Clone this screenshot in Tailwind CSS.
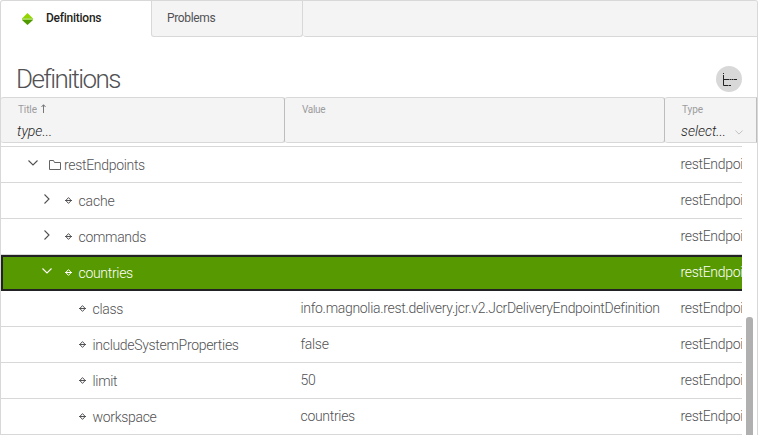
<!DOCTYPE html>
<html lang="en">
<head>
<meta charset="utf-8">
<title>Definitions</title>
<script src="https://cdn.jsdelivr.net/npm/@tailwindcss/browser@4"></script>
</head>
<body class="w-[758px] h-[435px] overflow-hidden bg-white font-['Roboto',sans-serif] text-[#525254]">
<svg class="hidden">
  <symbol id="down" viewBox="0 0 10 6"><path d="M.5 .5 5 5 9.500 .5" fill="none" stroke="currentColor" stroke-width="1.100"/></symbol>
  <symbol id="right" viewBox="0 0 6 10"><path d="M.5 .5 5 5 .5 9.500" fill="none" stroke="currentColor" stroke-width="1.100"/></symbol>
  <symbol id="node" viewBox="0 0 7 7"><path d="M3.500 .6 6.200 3.500 3.500 6.400 .8 3.500ZM0 3.500H7" fill="none" stroke="currentColor" stroke-width="1"/></symbol>
</svg>
<div class="relative flex flex-col w-[758px] h-[435px] overflow-hidden border-t border-x border-[#d8d8d8] rounded-t-[3px]">
  <nav class="flex h-9 shrink-0 text-[12px] leading-[34px]">
    <div class="w-[150px] flex items-start">
      <svg class="w-[11px] h-3 mt-3 ml-[20.500px]" viewBox="0 0 11 12"><path d="M5.500 0 11 5.500H0Z" fill="#93d500"/><path d="M0 5h11v2H0Z" fill="#a4d850"/><path d="M0 7H11L5.500 12Z" fill="#4f9a00"/></svg>
      <span class="ml-[13.500px] font-medium text-[#1f1f21] tracking-[-0.25px]">Definitions</span>
    </div>
    <div class="w-[152px] bg-[#f4f4f4] border-x border-b border-[#d8d8d8] rounded-b-[3px] pl-[15px] tracking-[-0.35px]">Problems</div>
    <div class="grow bg-[#f4f4f4] border-b border-[#d8d8d8] rounded-bl-[3px]"></div>
  </nav>
  <header class="flex h-[60px] shrink-0 justify-between pl-[15px] pr-[15px]">
    <h1 class="mt-[26px] text-[26px] leading-[32px] font-light tracking-[-1.600px]">Definitions</h1>
    <div class="w-[26px] h-[26px] mt-[29px] rounded-full bg-[#d8d8d8] flex">
      <svg class="w-[26px] h-[26px]" viewBox="0 0 26 26" fill="none" stroke="#222224"><path d="M7.500 7v1M7.500 9v10.500h5M7.500 13.500h6M14 13.500h1M15.500 13.500h2M18 13.500h3M13 19.500h2"/></svg>
    </div>
  </header>
  <div class="flex h-[46px] shrink-0 bg-[#f4f4f4] text-[10px] leading-[12px] text-[#9c9c9e] tracking-[-0.1px]">
    <div class="w-[284px] border-y border-r border-[#d8d8d8] border-r-[#bdbdbd] rounded-[3px] pl-[17px] pt-[6px]">
      <div class="flex h-3">Title<svg class="w-[5px] h-[9px] ml-[4px]" viewBox="0 0 5 9"><path d="M2.500 9V1M.5 3 2.500 .7 4.500 3" fill="none" stroke="#777"/></svg></div>
      <div class="-ml-px mt-[6px] text-[14px] leading-[18px] italic font-light text-[#222] tracking-normal">type...</div>
    </div>
    <div class="w-[380px] border-y border-r border-[#d8d8d8] border-r-[#bdbdbd] rounded-[3px] pl-[17px] pt-[6px] tracking-[-0.3px]">Value</div>
    <div class="grow border-y border-r border-[#d8d8d8] border-r-[#bdbdbd] rounded-l-[3px] pl-[17px] pt-[6px]">
      <div class="h-3">Type</div>
      <div class="flex -ml-px mt-[6px] text-[14px] leading-[18px] italic font-light text-[#222] tracking-normal"><span class="w-[54px]">select...</span><svg class="w-2 h-[5px] mt-[8px] text-[#bbb]"><use href="#down"/></svg></div>
    </div>
  </div>
  <main class="w-[741px] mt-[3px] border-t border-[#d8d8d8] text-[14px] leading-[35px] font-light tracking-[-0.310px] overflow-hidden">
    <div class="flex h-9 border-b border-[#d8d8d8]">
      <div class="flex w-[284px] shrink-0 pl-[27px]"><svg class="w-[10px] h-[6px] mt-[13px]"><use href="#down"/></svg><svg class="w-3 h-[10px] mt-[13px] ml-[11px] mr-[3px]" viewBox="0 0 12 10"><path d="M.5 9.500V.5H4.500L5.500 2.500H11.500V9.500Z" fill="none" stroke="currentColor" stroke-width=".9"/></svg><span class="mt-px">restEndpoints</span></div>
      <div class="w-[380px] shrink-0 pl-[15.500px]"></div><div class="pl-[15.500px]">restEndpoint</div>
    </div>
    <div class="flex h-9 border-b border-[#d8d8d8]">
      <div class="flex w-[284px] shrink-0 pl-[43px]"><svg class="w-[6px] h-[10px] mt-[11px]"><use href="#right"/></svg><svg class="w-[7px] h-[7px] mt-[14px] ml-[15px] mr-[6.500px]"><use href="#node"/></svg><span class="mt-px tracking-[-0.15px]">cache</span></div>
      <div class="w-[380px] shrink-0 pl-[15.500px]"></div><div class="pl-[15.500px]">restEndpoint</div>
    </div>
    <div class="flex h-9 border-b border-[#d8d8d8]">
      <div class="flex w-[284px] shrink-0 pl-[43px]"><svg class="w-[6px] h-[10px] mt-[11px]"><use href="#right"/></svg><svg class="w-[7px] h-[7px] mt-[14px] ml-[15px] mr-[6.500px]"><use href="#node"/></svg><span class="mt-px">commands</span></div>
      <div class="w-[380px] shrink-0 pl-[15.500px]"></div><div class="pl-[15.500px]">restEndpoint</div>
    </div>
    <div class="flex h-9 border-y-2 border-l-2 border-[#222224] bg-[#579900] text-white leading-[31px]">
      <div class="flex w-[282px] shrink-0 pl-[39px]"><svg class="w-[10px] h-[6px] mt-[11px]"><use href="#down"/></svg><svg class="w-[7px] h-[7px] mt-[12px] ml-[13px] mr-[6.500px]"><use href="#node"/></svg><span class="mt-px">countries</span></div>
      <div class="w-[380px] shrink-0 pl-[15.500px]"></div><div class="pl-[15.500px]">restEndpoint</div>
    </div>
    <div class="flex h-9 border-b border-[#d8d8d8]">
      <div class="flex w-[284px] shrink-0 pl-[78px]"><svg class="w-[7px] h-[7px] mt-[14px] mr-[6.500px]"><use href="#node"/></svg><span class="mt-px">class</span></div>
      <div class="w-[380px] shrink-0 pl-[15.500px]">info.magnolia.rest.delivery.jcr.v2.JcrDeliveryEndpointDefinition</div><div class="pl-[15.500px]">restEndpoint</div>
    </div>
    <div class="flex h-9 border-b border-[#d8d8d8]">
      <div class="flex w-[284px] shrink-0 pl-[78px]"><svg class="w-[7px] h-[7px] mt-[14px] mr-[6.500px]"><use href="#node"/></svg><span class="mt-px">includeSystemProperties</span></div>
      <div class="w-[380px] shrink-0 pl-[15.500px]">false</div><div class="pl-[15.500px]">restEndpoint</div>
    </div>
    <div class="flex h-9 border-b border-[#d8d8d8]">
      <div class="flex w-[284px] shrink-0 pl-[78px]"><svg class="w-[7px] h-[7px] mt-[14px] mr-[6.500px]"><use href="#node"/></svg><span class="mt-px">limit</span></div>
      <div class="w-[380px] shrink-0 pl-[15.500px]">50</div><div class="pl-[15.500px]">restEndpoint</div>
    </div>
    <div class="flex h-9 border-b border-[#d8d8d8]">
      <div class="flex w-[284px] shrink-0 pl-[78px]"><svg class="w-[7px] h-[7px] mt-[14px] mr-[6.500px]"><use href="#node"/></svg><span class="mt-px">workspace</span></div>
      <div class="w-[380px] shrink-0 pl-[15.500px]">countries</div><div class="pl-[15.500px]">restEndpoint</div>
    </div>
  </main>
  <div class="absolute left-[745px] top-[316px] w-[7px] h-[130px] rounded-[3px] bg-[#b0b0b0]"></div>
</div>
</body>
</html>
